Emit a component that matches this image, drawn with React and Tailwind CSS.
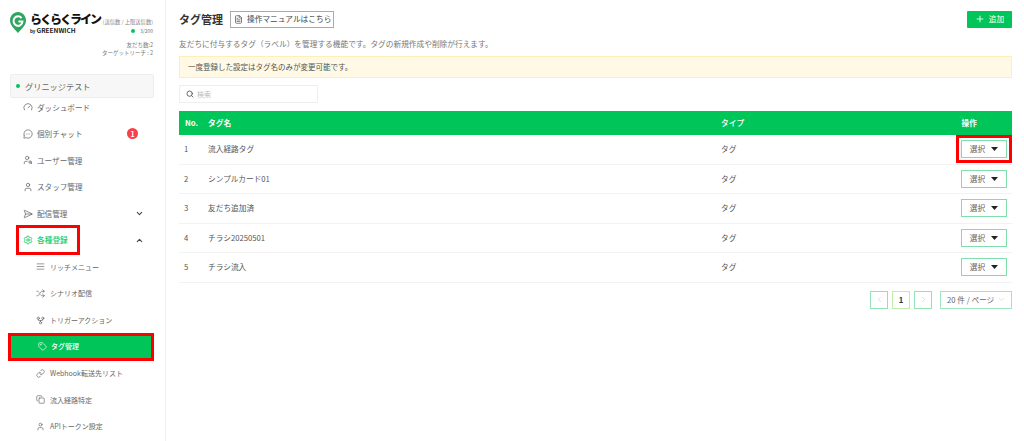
import { ChevronDown, ChevronUp, ChevronLeft, ChevronRight, Search, Plus, FileText, Gauge, MessageCircleMore, UserSearch, User, SendHorizontal, Settings, AlignJustify, Shuffle, GitFork, Tag, Link, Copy } from "lucide-react";

const TOP_ITEMS = [
  { label: "ダッシュボード", icon: Gauge },
  { label: "個別チャット", icon: MessageCircleMore, badge: "1" },
  { label: "ユーザー管理", icon: UserSearch },
  { label: "スタッフ管理", icon: User },
  { label: "配信管理", icon: SendHorizontal, chevron: "down" },
];

const SUB_ITEMS = [
  { label: "リッチメニュー", icon: AlignJustify },
  { label: "シナリオ配信", icon: Shuffle },
  { label: "トリガーアクション", icon: GitFork },
  { label: "タグ管理", icon: Tag, active: true },
  { label: "Webhook転送先リスト", icon: Link },
  { label: "流入経路特定", icon: Copy },
  { label: "APIトークン設定", icon: User },
];

const TAGS = ["流入経路タグ", "シンプルカード01", "友だち追加済", "チラシ20250501", "チラシ流入"];

function Logo() {
  return (
    <div className="flex items-start pl-[10px] pr-[12px] pt-[12px]">
      <svg width="16" height="21" viewBox="0 0 18 22" preserveAspectRatio="none" className="shrink-0">
        <path d="M9 0C4 0 0 4 0 9c0 5 5 9 9 13 4-4 9-8 9-13 0-5-4-9-9-9z" fill="#2fa55f" />
        <path d="M13 6.5A5 5 0 1 0 14 10H9.5" fill="none" stroke="#fff" strokeWidth="2.2" />
      </svg>
      <div className="ml-[4px] min-w-0 flex-1">
        <div className="flex h-[13px] items-center justify-between whitespace-nowrap">
          <span className="text-[12px] font-black leading-[12px] tracking-[-2px] text-[#111]">らくらくライン</span>
          <span className="mt-[6px] text-[5.3px] leading-[6px] text-[#888]">(送信数 / 上限送信数)</span>
        </div>
        <div className="mt-[2px] flex h-[7px] items-center justify-between whitespace-nowrap">
          <span className="text-[4.5px] font-bold leading-[7px] text-[#222]">
            by <span className="text-[6.5px] leading-[7px]">GREENWICH</span>
          </span>
          <span className="flex items-center gap-[5px] text-[5px] leading-[7px] text-[#777]">
            <span className="h-[4px] w-[4px] rounded-full bg-[#00c65a]" />
            3/200
          </span>
        </div>
      </div>
    </div>
  );
}

function SideRow({ item }) {
  const Icon = item.icon;
  return (
    <div className="flex h-[26.6px] items-center pl-[23px] pr-[21px] text-[7.6px] text-[#666]">
      <Icon size={10} strokeWidth={1.6} className="mr-[4px] shrink-0 text-[#555]" />
      <span>{item.label}</span>
      {item.badge ? (
        <span className="ml-auto mr-[6px] flex h-[11px] w-[11px] items-center justify-center rounded-full bg-[#f5424b] text-[7px] font-bold text-white">
          {item.badge}
        </span>
      ) : null}
      {item.chevron ? <ChevronDown size={9} strokeWidth={2.8} className="ml-auto text-[#444]" /> : null}
    </div>
  );
}

function SubRow({ item }) {
  const Icon = item.icon;
  if (item.active) {
    return (
      <div className="flex h-[26.6px] items-center">
        <div className="ml-[8px] flex h-[28px] w-[146px] shrink-0 items-center border-[3px] border-[#ff0000] bg-[#00c65a] pl-[27px] text-[7px] font-medium text-white">
          <Icon size={9} strokeWidth={1.8} className="mr-[4px]" />
          {item.label}
        </div>
      </div>
    );
  }
  return (
    <div className="flex h-[26.6px] items-center whitespace-nowrap pl-[36px] text-[7px] text-[#666]">
      <Icon size={9} strokeWidth={1.6} className="mr-[5px] shrink-0 text-[#555]" />
      {item.label}
    </div>
  );
}

function Sidebar() {
  return (
    <aside className="h-[441px] w-[166px] shrink-0 overflow-hidden border-r border-[#f0f0f0] bg-white">
      <Logo />
      <div className="mt-[7px] pr-[12px] text-right text-[5.5px] leading-[8px] text-[#777]">
        <div>友だち数:2</div>
        <div>ターゲットリーチ : 2</div>
      </div>
      <div className="ml-[10px] mt-[17px] flex h-[24px] w-[144px] items-center rounded-[2px] border border-[#eee] bg-[#f7f7f7] pl-[5px] text-[8.2px] text-[#666]">
        <span className="mr-[5px] h-[4px] w-[4px] rounded-full bg-[#00c65a]" />
        グリニッジテスト
      </div>
      <div className="mt-[-4px]">
        {TOP_ITEMS.map((item) => (
          <SideRow key={item.label} item={item} />
        ))}
        <div className="flex h-[26.6px] items-center pr-[21px]">
          <div className="ml-[16px] flex h-[30px] w-[64px] shrink-0 items-center border-[3px] border-[#ff0000] bg-white pl-[4px] text-[7.7px] font-medium text-[#17c964]">
            <Settings size={10} strokeWidth={2} className="mr-[4px]" />
            各種登録
          </div>
          <ChevronUp size={9} strokeWidth={2.8} className="ml-auto text-[#444]" />
        </div>
        {SUB_ITEMS.map((item) => (
          <SubRow key={item.label} item={item} />
        ))}
      </div>
    </aside>
  );
}

function TableRow({ no, name, highlighted }) {
  return (
    <div className="flex h-[29.5px] items-center border-b border-[#f2f2f2] text-[7.7px] text-[#555]">
      <div className="w-[29px] shrink-0 pl-[5px]">{no}</div>
      <div className="w-[513px] shrink-0">{name}</div>
      <div className="flex-1">タグ</div>
      <div className={highlighted ? "border-[3px] border-[#ff0000] px-[2px] py-[2px]" : "mr-[5px]"}>
        <button className="flex h-[18px] w-[46px] items-center justify-center gap-[6px] border border-[#7fdea9] bg-white text-[7.7px] text-[#666]">
          選択
          <svg width="7" height="4" viewBox="0 0 7 4" preserveAspectRatio="none">
            <path d="M0 0h7L3.5 4z" fill="#222" />
          </svg>
        </button>
      </div>
    </div>
  );
}

function Pagination() {
  return (
    <div className="mt-[8px] flex items-center justify-end text-[7.7px] text-[#666]">
      <div className="flex h-[18px] w-[18px] items-center justify-center border border-[#8fe3b4] text-[#c4c4c4]">
        <ChevronLeft size={9} strokeWidth={1.5} />
      </div>
      <div className="ml-[4px] flex h-[18px] w-[18px] items-center justify-center border border-[#bdeda8] font-bold text-[#333]">1</div>
      <div className="ml-[4px] flex h-[18px] w-[18px] items-center justify-center border border-[#8fe3b4] text-[#c4c4c4]">
        <ChevronRight size={9} strokeWidth={1.5} />
      </div>
      <div className="ml-[8px] flex h-[18px] w-[72px] items-center justify-between whitespace-nowrap border border-[#a0e6bf] pl-[6px] pr-[5px]">
        20 件 / ページ
        <ChevronDown size={9} strokeWidth={1.4} className="shrink-0 text-[#c4c4c4]" />
      </div>
    </div>
  );
}

export default function App() {
  return (
    <div
      className="flex h-[441px] w-[1024px] overflow-hidden bg-white"
      style={{ fontFamily: '"Noto Sans CJK JP", "Noto Sans", sans-serif' }}
    >
      <Sidebar />
      <main className="flex-1 pl-[13px] pr-[12px] pt-[10px]">
        <div className="flex h-[18px] items-center">
          <h1 className="text-[11px] font-bold text-[#333]">タグ管理</h1>
          <button className="ml-[7px] flex h-[17px] w-[104px] items-center border border-[#aaa] pl-[3px] text-[7.7px] text-[#444]">
            <FileText size={9} strokeWidth={1.8} className="mr-[4px]" />
            操作マニュアルはこちら
          </button>
          <button className="ml-auto flex h-[17px] w-[45px] items-center justify-center gap-[4px] rounded-[1px] bg-[#00c65a] text-[7.7px] text-white">
            <Plus size={10} strokeWidth={2} />
            追加
          </button>
        </div>
        <p className="mt-[10px] text-[7.7px] leading-[12px] text-[#777]">
          友だちに付与するタグ（ラベル）を管理する機能です。タグの新規作成や削除が行えます。
        </p>
        <div className="mt-[6px] flex h-[22px] items-center border border-[#fdeeba] bg-[#fff9e6] pl-[8px] text-[7.5px] text-[#555]">
          一度登録した設定はタグ名のみが変更可能です。
        </div>
        <div className="mt-[7px] flex h-[18px] w-[139px] items-center gap-[3px] border border-[#eee] pl-[6px] text-[7px] text-[#bbb]">
          <Search size={8} strokeWidth={2.6} className="text-[#555]" />
          検索
        </div>
        <div className="mt-[8px] flex h-[24px] items-center bg-[#00c65a] text-[7.7px] font-bold text-white">
          <div className="w-[29px] shrink-0 pl-[6px]">No.</div>
          <div className="w-[513px] shrink-0">タグ名</div>
          <div className="flex-1 font-medium">タイプ</div>
          <div className="mr-[35px]">操作</div>
        </div>
        {TAGS.map((name, index) => (
          <TableRow key={name} no={index + 1} name={name} highlighted={index === 0} />
        ))}
        <Pagination />
      </main>
    </div>
  );
}
